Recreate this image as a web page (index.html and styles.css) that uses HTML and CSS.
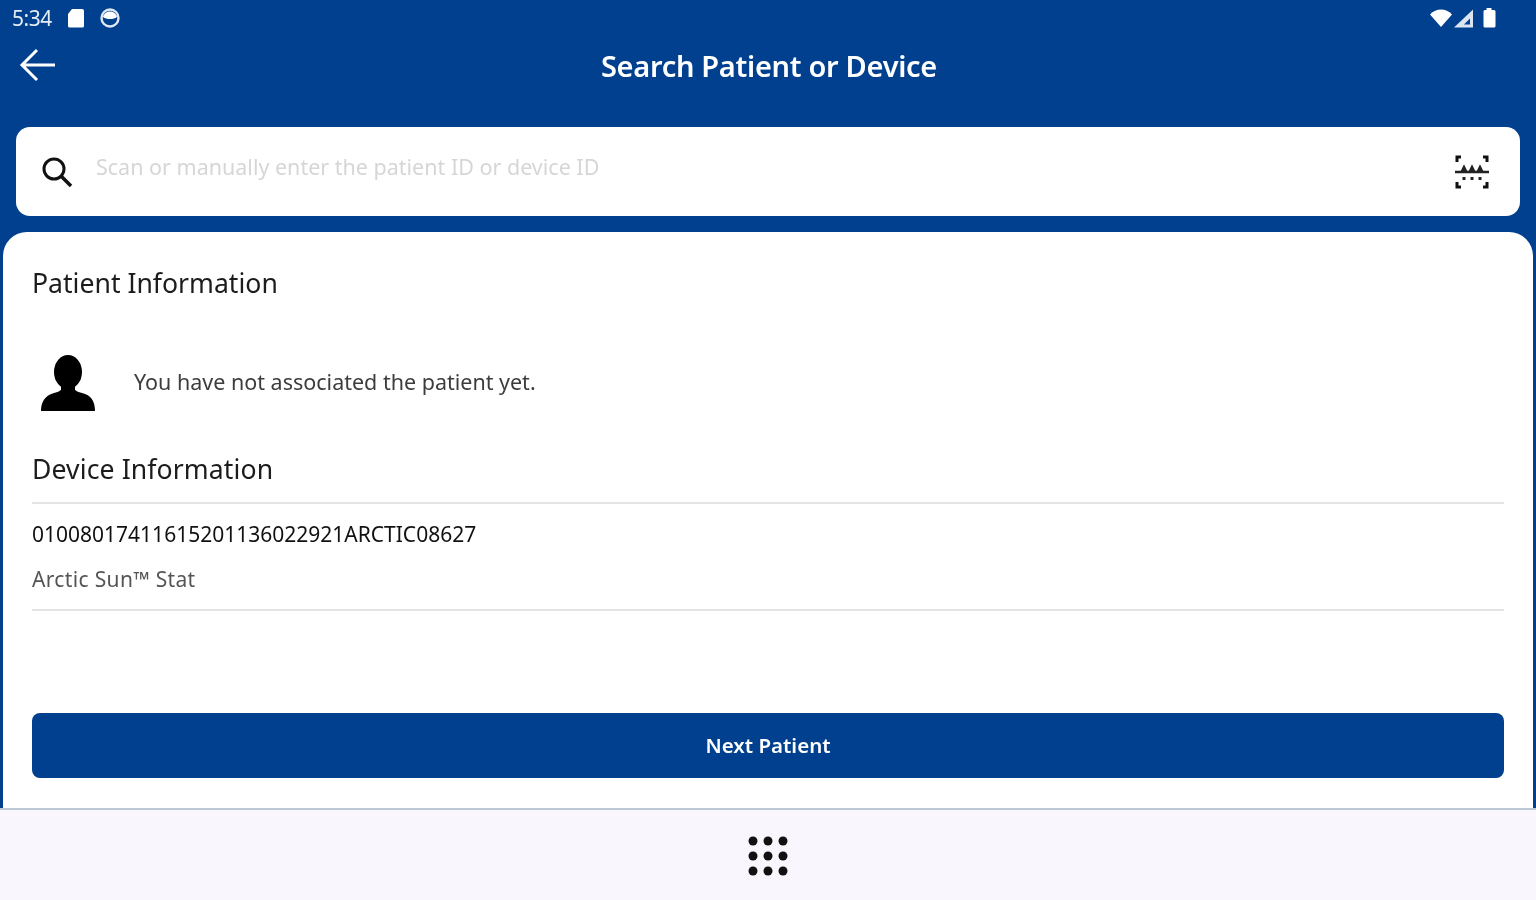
FILE: index.html
```html
<!DOCTYPE html>
<html lang="en">
<head>
	<meta charset="UTF-8" />
	<title>Search Patient or Device</title>
	<link rel="stylesheet" href="styles.css">
</head>
<body>
	<div class="app">
		<!-- 头部 -->
		<div class="header">
			<div class="status">
				<div class="status-left">
					<span class="clock">5:34</span>
					<svg class="sd-icon" width="18" height="20" viewBox="0 0 18 20"><path d="M5 1h10a2 2 0 0 1 2 2v15a1.500 1.500 0 0 1-1.500 1.500h-13A1.500 1.500 0 0 1 1 18V6z" fill="#fff"/></svg>
					<svg class="cast-icon" width="22" height="20" viewBox="0 0 22 20"><circle cx="11" cy="10" r="8.500" fill="none" stroke="#dfe8f3" stroke-width="2.400"/><path d="M4 9c1-4 4-5.500 7-5.500S17 5 18 9c-2 1.500-4 2-7 2s-5-.5-7-2z" fill="#fff"/></svg>
				</div>
				<div class="status-right">
					<svg width="24" height="18" viewBox="0 0 22 18"><path d="M0 5.500C3 2 7 .5 11 .5s8 1.500 11 5L11 18z" fill="#fff"/></svg>
					<svg width="22" height="21" viewBox="0 0 22 20"><path d="M1 19L20 1v18z" fill="#dbe4f0"/><path d="M11 16L17 10v6z" fill="#00408f"/></svg>
					<svg class="battery" width="15" height="20" viewBox="0 0 14 20"><path d="M4 0h5v2h2.500A1.500 1.500 0 0 1 13 3.500V18a1.500 1.500 0 0 1-1.500 1.500h-9A1.500 1.500 0 0 1 1 18V3.500A1.500 1.500 0 0 1 2.500 2H4z" fill="#fff"/></svg>
				</div>
			</div>
			<div class="toolbar">
				<svg class="back-icon" width="38" height="34" viewBox="0 0 38 34"><path d="M36 17H3M18 2L3 17l15 15" fill="none" stroke="#fff" stroke-width="3"/></svg>
				<div class="title">Search Patient or Device</div>
			</div>
			<div class="search">
				<svg width="32" height="32" viewBox="0 0 32 32"><circle cx="13" cy="13" r="10" fill="none" stroke="#111" stroke-width="3"/><path d="M20 20l10 10" stroke="#111" stroke-width="3.500"/></svg>
				<div class="placeholder">Scan or manually enter the patient ID or device ID</div>
				<svg width="36" height="36" viewBox="0 0 36 36">
					<path d="M3 8V3h4M29 3h4v5M3 28v5h4M29 33h4v-5" fill="none" stroke="#111" stroke-width="3"/>
					<path d="M1 18h34" stroke="#222" stroke-width="2.500"/>
					<path d="M7 18l3-6 3 6M15 18l3-6 3 6M23 18l3-6 3 6" fill="#222" stroke="#222" stroke-width="1.500"/>
					<path d="M10 23v3M18 23v3M26 23v3" stroke="#222" stroke-width="3"/>
				</svg>
			</div>
		</div>
		<!-- END of 头部 -->
		<div class="card">
			<h2 class="section">Patient Information</h2>
			<div class="patient">
				<svg class="person" width="56" height="58" viewBox="0 0 56 58"><ellipse cx="28" cy="17" rx="14" ry="17" fill="#000"/><path d="M21 30h14v6H21z" fill="#000"/><path d="M1 56c0-10 5-16 13-18 4-1 6-2 8-4 3 2 9 2 12 0 2 2 4 3 8 4 9 2 13 8 13 18z" fill="#000"/></svg>
				<span class="patient-msg">You have not associated the patient yet.</span>
			</div>
			<h2 class="section device-title">Device Information</h2>
			<div class="device">
				<div class="device-id">01008017411615201136022921ARCTIC08627</div>
				<div class="device-name">Arctic Sun™ Stat</div>
			</div>
			<div class="next-wrap">
				<div class="next-btn">Next Patient</div>
			</div>
		</div>
		<div class="navbar">
			<svg width="40" height="40" viewBox="0 0 40 40" fill="#111">
				<circle cx="5" cy="5" r="4.500"/><circle cx="20" cy="5" r="4.500"/><circle cx="35" cy="5" r="4.500"/>
				<circle cx="5" cy="20" r="4.500"/><circle cx="20" cy="20" r="4.500"/><circle cx="35" cy="20" r="4.500"/>
				<circle cx="5" cy="35" r="4.500"/><circle cx="20" cy="35" r="4.500"/><circle cx="35" cy="35" r="4.500"/>
			</svg>
		</div>
	</div>
</body>
</html>
```

FILE: styles.css
```css
html,
body {
	margin: 0;
	padding: 0;
	height: 100%;
	background-color: #f9f7fd;
	font-family: "Noto Sans", "Open Sans", sans-serif;
}

/* the reference is an upscaled, soft picture */
.app {
	width: 1536px;
	height: 900px;
	display: flex;
	flex-direction: column;
	overflow: hidden;
	background-color: #00408f;
	filter: blur(0.6px);
}

.header {
	height: 232px;
	flex: none;
	color: #fff;
}

.status {
	height: 36px;
	display: flex;
	justify-content: space-between;
	align-items: center;
	padding: 0 39px 0 12px;
}

.status-left,
.status-right {
	display: flex;
	align-items: center;
}

.status-left {
	gap: 15px;
}

.status-right {
	gap: 0;
}

.battery {
	margin-left: 7px;
}

.clock {
	font-size: 21px;
	color: #e6ecf5;
	letter-spacing: -0.500px;
}

.cast-icon {
	margin-left: -1px;
}

.toolbar {
	height: 60px;
	margin-top: -1px;
	display: flex;
	align-items: center;
	position: relative;
	padding-left: 19px;
}

.title {
	position: absolute;
	left: 0;
	right: 0;
	text-align: center;
	font-size: 29px;
	font-weight: 600;
	letter-spacing: -0.300px;
	margin-left: 2px;
}

.search {
	height: 89px;
	margin: 32px 16px 0;
	padding: 0 30px 0 25px;
	display: flex;
	align-items: center;
	background-color: #fff;
	border-radius: 14px;
	box-sizing: border-box;
}

.search svg {
	flex: none;
}

.placeholder {
	flex: 1;
	font-size: 21.500px;
	color: #d6d6d6;
	padding-left: 23px;
	margin-top: -10px;
}

.card {
	flex: 1;
	margin: 0 3px;
	padding: 28px 29px 0;
	background-color: #fff;
	border-radius: 24px 24px 0 0;
	display: flex;
	flex-direction: column;
}

.section {
	margin: 0;
	font-size: 26.600px;
	font-weight: 400;
	line-height: 46px;
	color: #1c1c1c;
}

.device-title {
	margin-top: 16px;
	letter-spacing: 0.100px;
}

.patient {
	height: 94px;
	margin-top: 30px;
	display: flex;
	align-items: center;
	gap: 38px;
	padding-left: 8px;
}

.person {
	margin-top: 2px;
}

.patient-msg {
	font-size: 21.500px;
	color: #3d3d3d;
	margin-top: -3px;
}

.device {
	margin-top: 10px;
	border-top: 2px solid #e4e4e4;
	border-bottom: 2px solid #e4e4e4;
	height: 93px;
	padding-top: 12px;
}

.device-id {
	font-size: 21px;
	line-height: 36px;
	color: #111;
}

.device-name {
	font-size: 21px;
	line-height: 36px;
	margin-top: 9px;
	color: #555;
	letter-spacing: 0.350px;
}

.next-wrap {
	margin-top: 102px;
}

.next-btn {
	height: 65px;
	line-height: 65px;
	text-align: center;
	font-size: 20.500px;
	font-weight: 600;
	color: #fff;
	background-color: #00408f;
	border-radius: 8px;
}

.navbar {
	height: 92px;
	flex: none;
	display: flex;
	align-items: center;
	justify-content: center;
	background-color: #f9f7fd;
	border-top: 2px solid #bcc7d8;
	box-sizing: border-box;
}

.navbar svg {
	margin-top: 2px;
}
```
